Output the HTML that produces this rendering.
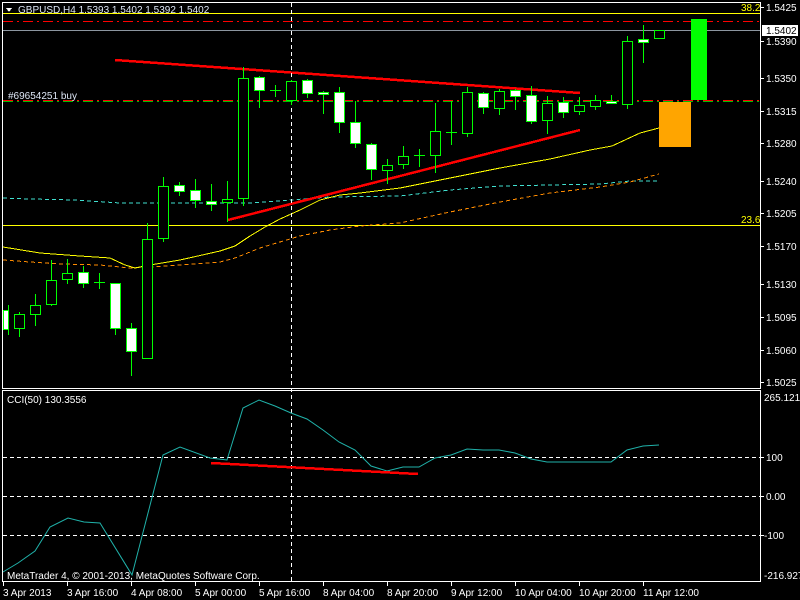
<!DOCTYPE html>
<html><head><meta charset="utf-8"><style>
html,body{margin:0;padding:0;background:#000;width:800px;height:600px;overflow:hidden}
svg{display:block}
text{font-family:"Liberation Sans",sans-serif;font-size:10px}
</style></head><body>
<svg width="800" height="600" viewBox="0 0 800 600" xmlns="http://www.w3.org/2000/svg" shape-rendering="crispEdges">
<rect width="800" height="600" fill="#000"/>
<rect x="2.5" y="2.5" width="758" height="386" fill="none" stroke="#fff" stroke-width="1"/>
<rect x="2.5" y="390.5" width="758" height="191" fill="none" stroke="#fff" stroke-width="1"/>
<line x1="3" y1="13.5" x2="760" y2="13.5" stroke="#ffff00"/>
<line x1="3" y1="21.5" x2="760" y2="21.5" stroke="#ff0000" stroke-dasharray="10,4,2,4"/>
<line x1="3" y1="30.5" x2="760" y2="30.5" stroke="#8c96a0"/>
<line x1="3" y1="101.5" x2="760" y2="101.5" stroke="#00c000" stroke-dasharray="10,4,2,4"/>
<line x1="3" y1="100.5" x2="760" y2="100.5" stroke="#ff0000" stroke-dasharray="10,4,2,4"/>
<line x1="3" y1="225.5" x2="760" y2="225.5" stroke="#ffff00"/>
<text x="741" y="11" fill="#ffff00">38.2</text>
<text x="741" y="223" fill="#ffff00">23.6</text>
<polyline fill="none" stroke="#40e0d0" stroke-dasharray="4,3" points="3,198 30,199 75,200 120,203 200,203 250,203 290,200 330,197 400,196 450,190 500,186 550,185 600,184 630,181 659,181"/>
<polyline fill="none" stroke="#ff8c00" stroke-dasharray="4,3" points="3,260 30,262 60,264 100,265 130,268 150,267 180,265 220,262 235,258 260,248 280,242 300,236 330,230 360,226 400,223 450,212 500,202 550,193 600,187 630,182 659,174"/>
<polyline fill="none" stroke="#ffff00" points="3,247 40,253 80,256 110,258 125,265 135,268 150,265 180,260 220,251 235,246 250,236 265,227 280,219 300,210 320,200 340,195 360,193 400,188 450,178 500,168 550,159 590,150 612,146 640,133 659,128"/>
<line x1="115" y1="60" x2="580" y2="93" stroke="#ff0000" stroke-width="2.5"/>
<line x1="228" y1="220" x2="580" y2="130" stroke="#ff0000" stroke-width="2.5"/>
<rect x="691" y="19" width="16" height="81" fill="#00ff00"/>
<rect x="659" y="102" width="32" height="45" fill="#ffa500"/>
<line x1="291.5" y1="3" x2="291.5" y2="581" stroke="#fff" stroke-dasharray="4,3"/>
<g stroke="#00ff00" stroke-width="1">
<line x1="8.5" y1="305" x2="8.5" y2="335"/><rect x="3.5" y="310.5" width="5" height="19" fill="#fff"/>
<line x1="19.5" y1="312" x2="19.5" y2="337"/><rect x="14.5" y="314.5" width="10" height="14" fill="#000"/>
<line x1="35.5" y1="294" x2="35.5" y2="326"/><rect x="30.5" y="305.5" width="10" height="9" fill="#000"/>
<line x1="51.5" y1="260" x2="51.5" y2="306"/><rect x="46.5" y="280.5" width="10" height="24" fill="#000"/>
<line x1="67.5" y1="259" x2="67.5" y2="284"/><rect x="62.5" y="273.5" width="10" height="6" fill="#000"/>
<line x1="83.5" y1="266" x2="83.5" y2="288"/><rect x="78.5" y="272.5" width="10" height="11" fill="#fff"/>
<line x1="99.5" y1="273" x2="99.5" y2="289"/><line x1="94" y1="282.5" x2="105" y2="282.5"/>
<line x1="115.5" y1="283" x2="115.5" y2="335"/><rect x="110.5" y="283.5" width="10" height="45" fill="#fff"/>
<line x1="131.5" y1="323" x2="131.5" y2="376"/><rect x="126.5" y="328.5" width="10" height="23" fill="#fff"/>
<line x1="147.5" y1="223" x2="147.5" y2="358"/><rect x="142.5" y="239.5" width="10" height="119" fill="#000"/>
<line x1="163.5" y1="177" x2="163.5" y2="242"/><rect x="158.5" y="186.5" width="10" height="52" fill="#000"/>
<line x1="179.5" y1="182" x2="179.5" y2="196"/><rect x="174.5" y="185.5" width="10" height="6" fill="#fff"/>
<line x1="195.5" y1="179" x2="195.5" y2="208"/><rect x="190.5" y="190.5" width="10" height="10" fill="#fff"/>
<line x1="211.5" y1="184" x2="211.5" y2="211"/><rect x="206.5" y="201.5" width="10" height="3" fill="#fff"/>
<line x1="227.5" y1="181" x2="227.5" y2="222"/><rect x="222.5" y="199.5" width="10" height="3" fill="#000"/>
<line x1="243.5" y1="67" x2="243.5" y2="206"/><rect x="238.5" y="78.5" width="10" height="120" fill="#000"/>
<line x1="259.5" y1="76" x2="259.5" y2="108"/><rect x="254.5" y="77.5" width="10" height="13" fill="#fff"/>
<line x1="275.5" y1="85" x2="275.5" y2="97"/><line x1="270" y1="90.5" x2="281" y2="90.5"/>
<line x1="291.5" y1="80" x2="291.5" y2="105"/><rect x="286.5" y="81.5" width="10" height="19" fill="#000"/>
<line x1="307.5" y1="79" x2="307.5" y2="98"/><rect x="302.5" y="80.5" width="10" height="13" fill="#fff"/>
<line x1="323.5" y1="91" x2="323.5" y2="114"/><rect x="318.5" y="92.5" width="10" height="2" fill="#fff"/>
<line x1="339.5" y1="87" x2="339.5" y2="133"/><rect x="334.5" y="92.5" width="10" height="30" fill="#fff"/>
<line x1="355.5" y1="101" x2="355.5" y2="148"/><rect x="350.5" y="122.5" width="10" height="21" fill="#fff"/>
<line x1="371.5" y1="143" x2="371.5" y2="180"/><rect x="366.5" y="144.5" width="10" height="25" fill="#fff"/>
<line x1="387.5" y1="159" x2="387.5" y2="184"/><rect x="382.5" y="165.5" width="10" height="5" fill="#000"/>
<line x1="403.5" y1="146" x2="403.5" y2="169"/><rect x="398.5" y="156.5" width="10" height="8" fill="#000"/>
<line x1="419.5" y1="149" x2="419.5" y2="167"/><line x1="414" y1="155.5" x2="425" y2="155.5"/>
<line x1="435.5" y1="103" x2="435.5" y2="173"/><rect x="430.5" y="131.5" width="10" height="24" fill="#000"/>
<line x1="451.5" y1="101" x2="451.5" y2="145"/><line x1="446" y1="132.5" x2="457" y2="132.5"/>
<line x1="467.5" y1="87" x2="467.5" y2="137"/><rect x="462.5" y="92.5" width="10" height="41" fill="#000"/>
<line x1="483.5" y1="92" x2="483.5" y2="114"/><rect x="478.5" y="93.5" width="10" height="14" fill="#fff"/>
<line x1="499.5" y1="89" x2="499.5" y2="115"/><rect x="494.5" y="91.5" width="10" height="17" fill="#000"/>
<line x1="515.5" y1="89" x2="515.5" y2="110"/><rect x="510.5" y="90.5" width="10" height="6" fill="#fff"/>
<line x1="531.5" y1="86" x2="531.5" y2="124"/><rect x="526.5" y="95.5" width="10" height="26" fill="#fff"/>
<line x1="547.5" y1="96" x2="547.5" y2="134"/><rect x="542.5" y="103.5" width="10" height="17" fill="#000"/>
<line x1="563.5" y1="97" x2="563.5" y2="118"/><rect x="558.5" y="102.5" width="10" height="10" fill="#fff"/>
<line x1="579.5" y1="97" x2="579.5" y2="115"/><rect x="574.5" y="105.5" width="10" height="6" fill="#000"/>
<line x1="595.5" y1="95" x2="595.5" y2="110"/><rect x="590.5" y="100.5" width="10" height="6" fill="#000"/>
<line x1="611.5" y1="95" x2="611.5" y2="104"/><rect x="606.5" y="101.5" width="10" height="2" fill="#fff"/>
<line x1="627.5" y1="36" x2="627.5" y2="109"/><rect x="622.5" y="41.5" width="10" height="63" fill="#000"/>
<line x1="643.5" y1="25" x2="643.5" y2="63"/><rect x="638.5" y="39.5" width="10" height="3" fill="#fff"/>
<line x1="659.5" y1="30" x2="659.5" y2="39"/><rect x="654.5" y="30.5" width="10" height="8" fill="#000"/>
</g>
<text x="18" y="13" fill="#dde6f5">GBPUSD,H4  1.5393 1.5402 1.5392 1.5402</text>
<polygon points="6,8 12,8 9,12" fill="#fff"/>
<text x="8" y="99" fill="#dde6f5">#69654251 buy</text>
<g fill="#fff">
<text x="766" y="11">1.5425</text>
<text x="766" y="45">1.5390</text>
<text x="766" y="82">1.5350</text>
<text x="766" y="115">1.5315</text>
<text x="766" y="147">1.5280</text>
<text x="766" y="185">1.5240</text>
<text x="766" y="217">1.5205</text>
<text x="766" y="250">1.5170</text>
<text x="766" y="288">1.5130</text>
<text x="766" y="321">1.5095</text>
<text x="766" y="354">1.5060</text>
<text x="766" y="386">1.5025</text>
</g>
<g stroke="#fff"><line x1="761" y1="7.5" x2="764" y2="7.5"/><line x1="761" y1="41.5" x2="764" y2="41.5"/><line x1="761" y1="78.5" x2="764" y2="78.5"/><line x1="761" y1="111.5" x2="764" y2="111.5"/><line x1="761" y1="143.5" x2="764" y2="143.5"/><line x1="761" y1="181.5" x2="764" y2="181.5"/><line x1="761" y1="213.5" x2="764" y2="213.5"/><line x1="761" y1="246.5" x2="764" y2="246.5"/><line x1="761" y1="284.5" x2="764" y2="284.5"/><line x1="761" y1="317.5" x2="764" y2="317.5"/><line x1="761" y1="350.5" x2="764" y2="350.5"/><line x1="761" y1="382.5" x2="764" y2="382.5"/></g>
<rect x="762" y="25" width="36" height="11" fill="#fff"/>
<text x="766" y="34" fill="#000">1.5402</text>
<g stroke="#fff" stroke-dasharray="4,3"><line x1="3" y1="457.5" x2="760" y2="457.5"/><line x1="3" y1="496.5" x2="760" y2="496.5"/><line x1="3" y1="535.5" x2="760" y2="535.5"/></g>
<polyline fill="none" stroke="#20b2aa" shape-rendering="auto" points="3,572 18,563 35,551 50,527 68,518 84,522 100,523 132,575 163,455 180,447 210,458 227,460 243,408 259,400 275,406 291,413 307,419 323,430 339,442 355,450 371,466 387,471 403,467 419,467 435,458 451,455 467,449 483,450 499,450 515,453 531,459 547,462 563,462 611,462 627,450 643,446 659,445"/>
<line x1="211" y1="463" x2="418" y2="474" stroke="#ff0000" stroke-width="2.5"/>
<text x="7" y="403" fill="#fff">CCI(50) 130.3556</text>
<text x="7" y="579" fill="#fff">MetaTrader 4, © 2001-2013, MetaQuotes Software Corp.</text>
<g fill="#fff">
<text x="764" y="401">265.1214</text>
<text x="766" y="461">100</text>
<text x="766" y="500">0.00</text>
<text x="764" y="539">-100</text>
<text x="764" y="579">-216.927</text>
</g>
<g stroke="#fff"><line x1="761" y1="457.5" x2="764" y2="457.5"/><line x1="761" y1="496.5" x2="764" y2="496.5"/><line x1="761" y1="535.5" x2="764" y2="535.5"/></g>
<g stroke="#fff"><line x1="3.5" y1="582" x2="3.5" y2="586"/><line x1="67.5" y1="582" x2="67.5" y2="586"/><line x1="131.5" y1="582" x2="131.5" y2="586"/><line x1="195.5" y1="582" x2="195.5" y2="586"/><line x1="259.5" y1="582" x2="259.5" y2="586"/><line x1="323.5" y1="582" x2="323.5" y2="586"/><line x1="387.5" y1="582" x2="387.5" y2="586"/><line x1="451.5" y1="582" x2="451.5" y2="586"/><line x1="515.5" y1="582" x2="515.5" y2="586"/><line x1="579.5" y1="582" x2="579.5" y2="586"/><line x1="643.5" y1="582" x2="643.5" y2="586"/></g>
<g fill="#fff">
<text x="3" y="596">3 Apr 2013</text>
<text x="67" y="596">3 Apr 16:00</text>
<text x="131" y="596">4 Apr 08:00</text>
<text x="195" y="596">5 Apr 00:00</text>
<text x="259" y="596">5 Apr 16:00</text>
<text x="323" y="596">8 Apr 04:00</text>
<text x="387" y="596">8 Apr 20:00</text>
<text x="451" y="596">9 Apr 12:00</text>
<text x="515" y="596">10 Apr 04:00</text>
<text x="579" y="596">10 Apr 20:00</text>
<text x="643" y="596">11 Apr 12:00</text>
</g>
</svg>
</body></html>
